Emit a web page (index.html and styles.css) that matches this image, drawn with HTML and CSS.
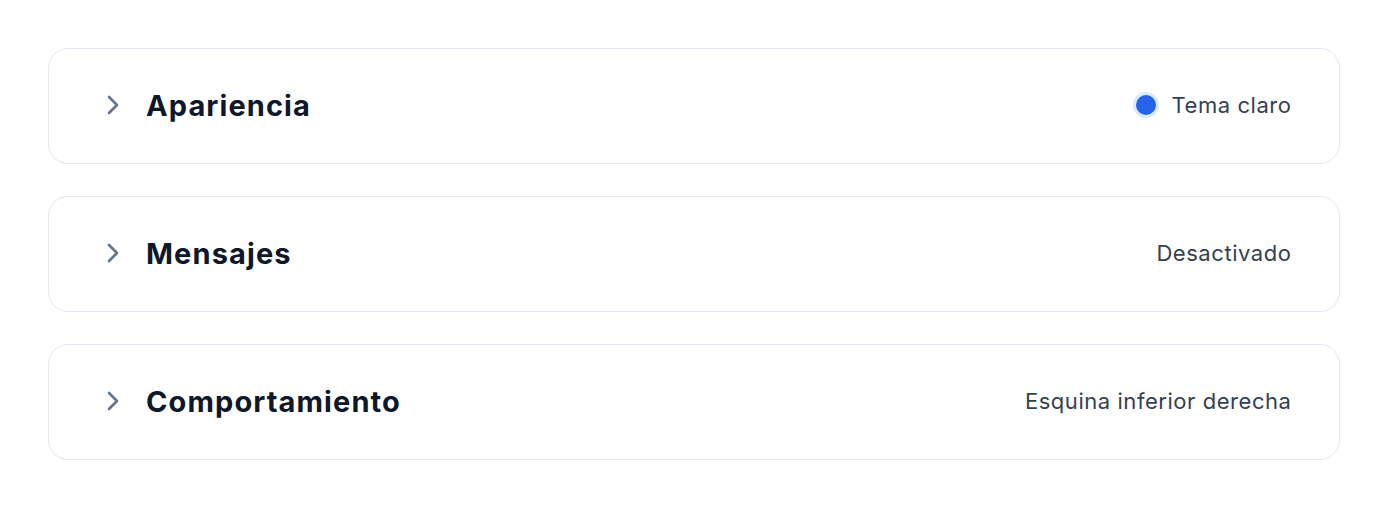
FILE: index.html
```html
<!DOCTYPE html>
<html lang="es">
<head>
<meta charset="utf-8">
<link rel="stylesheet" href="styles.css">
</head>
<body>
<div class="list">
  <div class="card">
    <div class="left">
      <svg class="chev" width="32" height="32" viewBox="0 0 24 24" fill="none" stroke="currentColor" stroke-width="2" stroke-linecap="round" stroke-linejoin="round"><path d="m9 18 6-6-6-6"/></svg>
      <span class="title">Apariencia</span>
    </div>
    <div class="right"><span class="dot"></span><span class="value">Tema claro</span></div>
  </div>
  <div class="card">
    <div class="left">
      <svg class="chev" width="32" height="32" viewBox="0 0 24 24" fill="none" stroke="currentColor" stroke-width="2" stroke-linecap="round" stroke-linejoin="round"><path d="m9 18 6-6-6-6"/></svg>
      <span class="title">Mensajes</span>
    </div>
    <div class="right"><span class="value">Desactivado</span></div>
  </div>
  <div class="card">
    <div class="left">
      <svg class="chev" width="32" height="32" viewBox="0 0 24 24" fill="none" stroke="currentColor" stroke-width="2" stroke-linecap="round" stroke-linejoin="round"><path d="m9 18 6-6-6-6"/></svg>
      <span class="title">Comportamiento</span>
    </div>
    <div class="right"><span class="value">Esquina inferior derecha</span></div>
  </div>
</div>
</body>
</html>
```
FILE: styles.css
```css
html, body {
  margin: 0;
  background: #ffffff;
}
body {
  padding: 48px;
  font-family: Inter, "Noto Sans", sans-serif;
}
.list {
  display: flex;
  flex-direction: column;
  gap: 32px;
}
.card {
  display: flex;
  align-items: center;
  justify-content: space-between;
  height: 116px;
  box-sizing: border-box;
  padding: 0 48px 2px 48px;
  border: 1.5px solid #e2e8f0;
  border-radius: 20px;
}
.left {
  display: flex;
  align-items: center;
  gap: 17px;
}
.chev {
  color: #64748b;
  display: block;
}
.title {
  font-size: 29px;
  font-weight: 700;
  color: #0f172a;
  letter-spacing: 1.1px;
}
.right {
  display: flex;
  align-items: center;
  gap: 16px;
}
.dot {
  width: 20px;
  height: 20px;
  border-radius: 50%;
  background: #2563eb;
  box-shadow: 0 0 0 3px #dbeafe;
}
.value {
  font-size: 22px;
  color: #334155;
  letter-spacing: 0.55px;
  margin-right: -0.5px;
}
```
